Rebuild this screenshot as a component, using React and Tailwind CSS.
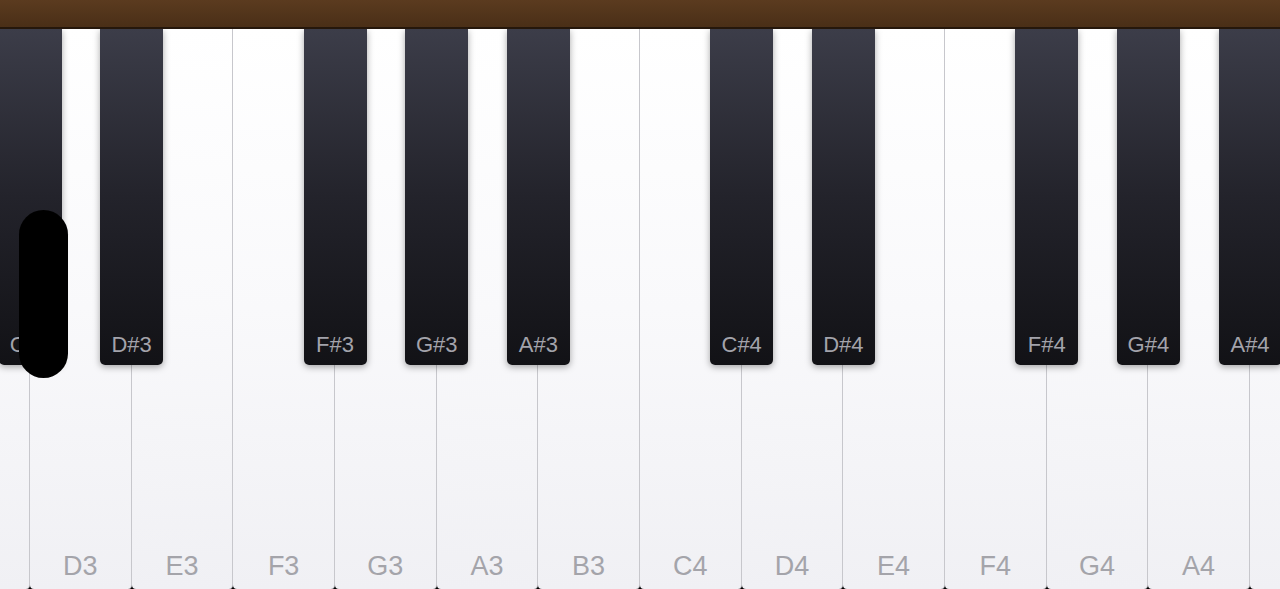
import React from "react";

const WHITE_W = 101.67;
const OFFSET = -71.67;
const BLACK_W = 63;

const whiteKeys = ["C3", "D3", "E3", "F3", "G3", "A3", "B3", "C4", "D4", "E4", "F4", "G4", "A4", "B4"];

// black keys sit centred on the boundary after white key index i
const blackKeys = [
  { i: 0, label: "C#3" },
  { i: 1, label: "D#3" },
  { i: 3, label: "F#3" },
  { i: 4, label: "G#3" },
  { i: 5, label: "A#3" },
  { i: 7, label: "C#4" },
  { i: 8, label: "D#4" },
  { i: 10, label: "F#4" },
  { i: 11, label: "G#4" },
  { i: 12, label: "A#4" },
];

const font = { fontFamily: '"Liberation Sans", Arial, sans-serif' };

export default function App() {
  return (
    <div className="w-[1280px] h-[589px] overflow-hidden bg-black flex flex-col" style={font}>
      <div className="h-[27px] bg-gradient-to-b from-[#5b3b1f] to-[#4a2f17]" />
      <div className="h-[2px] bg-[#25170b]" />

      <div className="relative flex-1 overflow-hidden">
        <div className="flex h-full ml-[-71.67px]">
          {whiteKeys.map((k) => (
            <div
              key={k}
              className="h-full w-[101.67px] shrink-0 border-r border-[#c7c7cc] rounded-b-[4px] bg-gradient-to-b from-[#ffffff] via-[#f9f9fb] to-[#f0f0f4] flex items-end justify-center pb-[6px]"
            >
              <span className="text-[27px] leading-[34px] text-[#a4a4aa]">{k}</span>
            </div>
          ))}
        </div>

        {blackKeys.map((b) => (
          <div
            key={b.label}
            className="absolute top-0 h-[336px] w-[63px] rounded-b-[5px] bg-gradient-to-b from-[#3c3d49] via-[#23232b] to-[#121216] shadow-[0_2px_7px_rgba(0,0,0,0.35)] flex items-end justify-center pb-[7px]"
            style={{ left: OFFSET + (b.i + 1) * WHITE_W - BLACK_W / 2 }}
          >
            <span className="text-[22px] leading-[26px] text-[#a3a3ab]">{b.label}</span>
          </div>
        ))}

        <div className="absolute left-[19px] top-[181px] w-[49px] h-[168px] rounded-full bg-black" />
      </div>
    </div>
  );
}
